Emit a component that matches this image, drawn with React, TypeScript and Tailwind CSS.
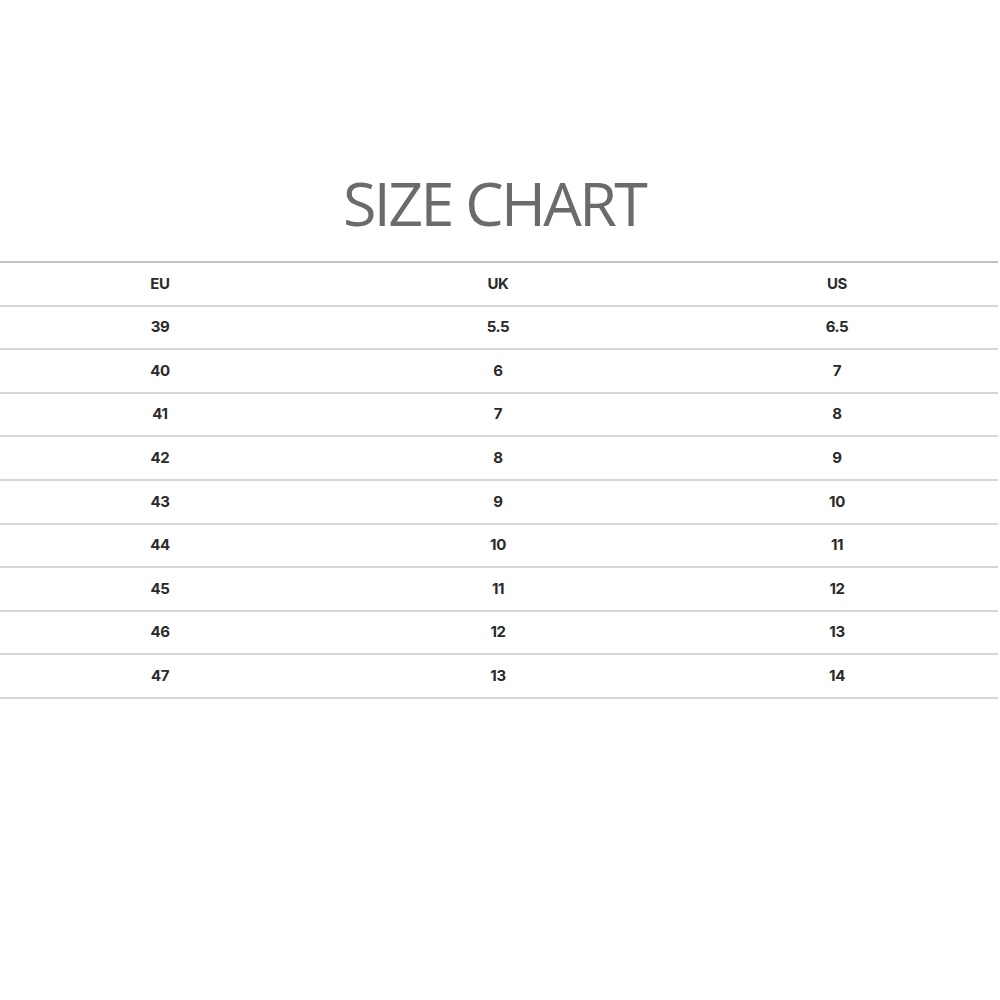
const rows: [string, string, string][] = [
  ["39", "5.5", "6.5"],
  ["40", "6", "7"],
  ["41", "7", "8"],
  ["42", "8", "9"],
  ["43", "9", "10"],
  ["44", "10", "11"],
  ["45", "11", "12"],
  ["46", "12", "13"],
  ["47", "13", "14"],
];

function Row({ cells, first }: { cells: [string, string, string]; first?: boolean }) {
  return (
    <div
      className={`grid grid-cols-[320px_356px_322px] items-center border-b-2 border-[#d6d6d6] ${
        first ? "h-[45.6px] border-t-2 border-t-[#c4c4c4]" : "h-[43.6px]"
      }`}
    >
      {cells.map((c, i) => (
        <span key={i} className="text-center text-[15px] font-bold tracking-tight text-[#2a2a2a]">
          {c}
        </span>
      ))}
    </div>
  );
}

export default function App() {
  return (
    <div className="h-[1000px] w-[1000px] bg-white font-['Inter',sans-serif]">
      <div className="pt-[166px] pl-[343px]">
        <h1 className="font-['Open_Sans',sans-serif] text-[61px] leading-[74px] font-[370] tracking-[-2.6px] text-[#6b6b6b]">
          SIZE CHART
        </h1>
      </div>
      <div className="mt-[21px] w-[998px]">
        <Row cells={["EU", "UK", "US"]} first />
        {rows.map((r) => (
          <Row key={r[0]} cells={r} />
        ))}
      </div>
    </div>
  );
}
